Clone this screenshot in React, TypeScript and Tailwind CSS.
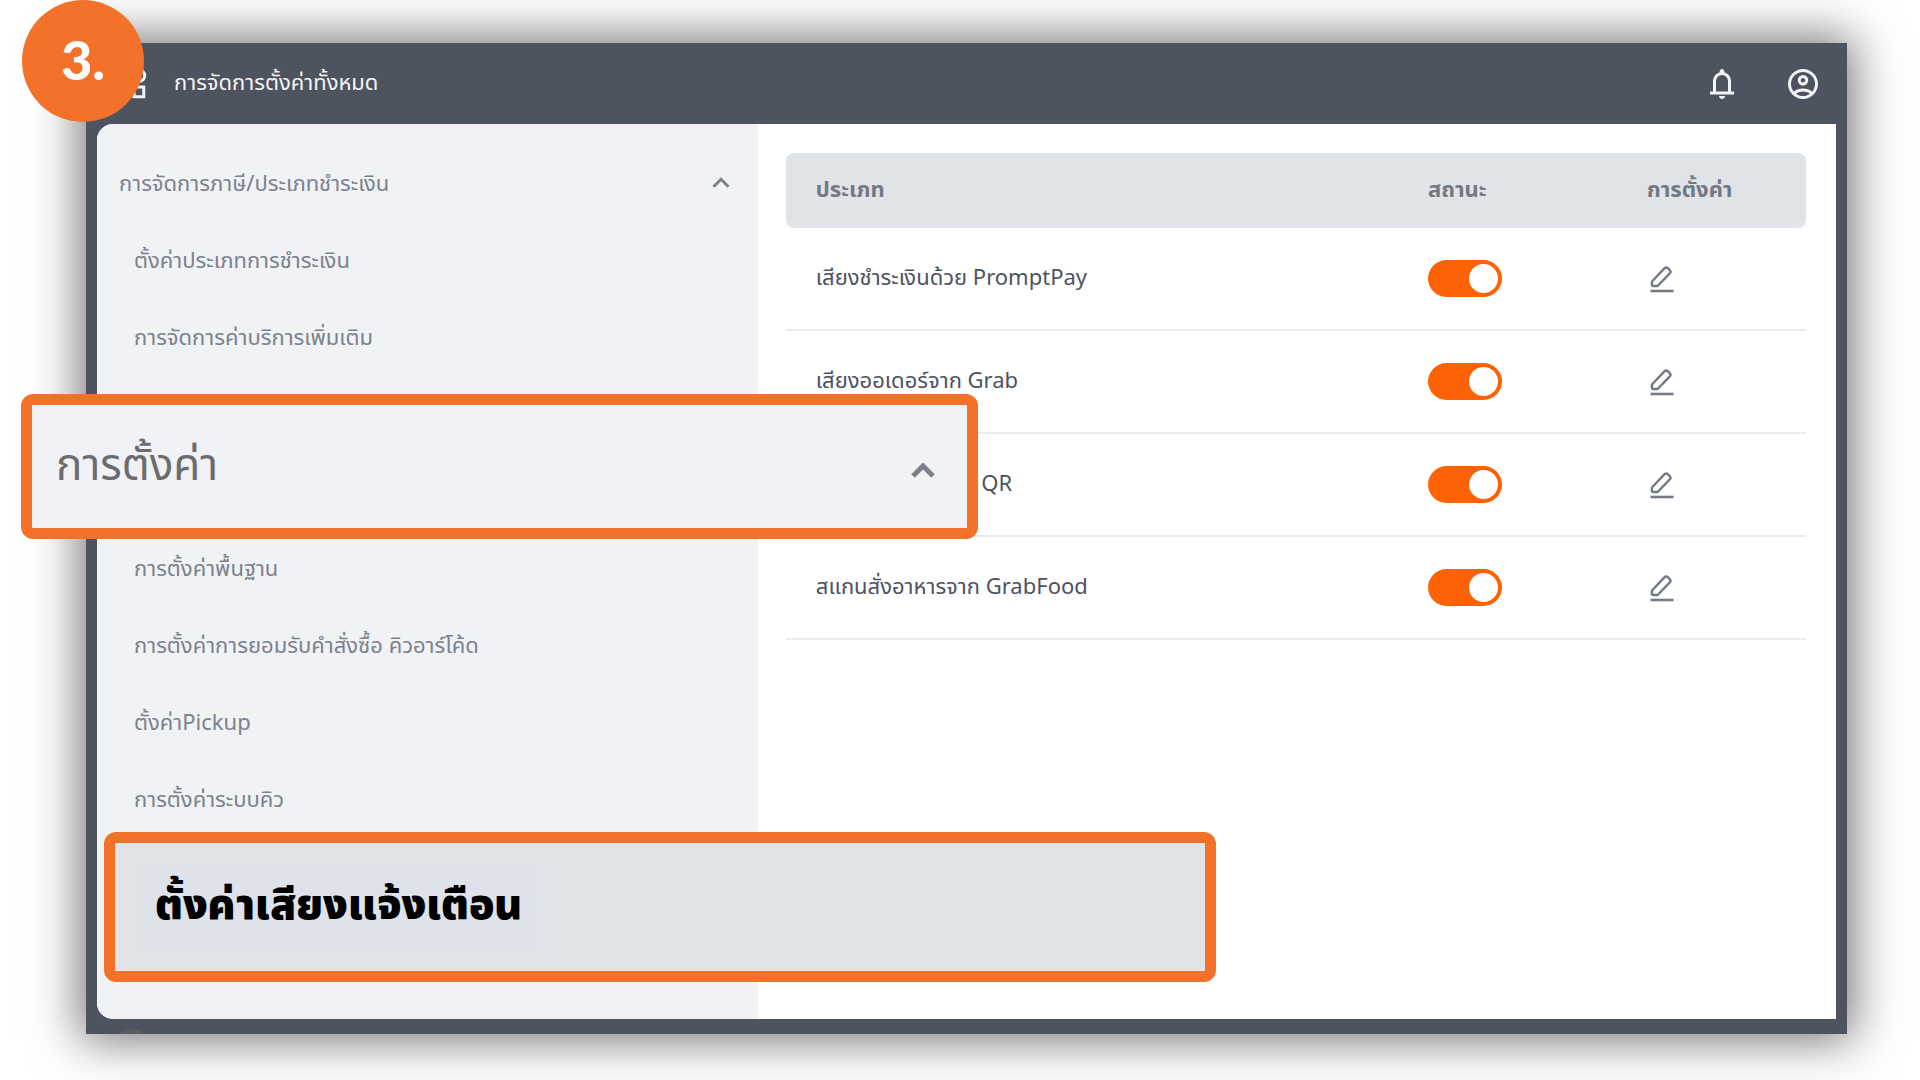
import { useState, type ReactNode } from 'react'

const taxItems = ['ตั้งค่าประเภทการชำระเงิน', 'การจัดการค่าบริการเพิ่มเติม']

const settingItems = [
  'การตั้งค่าพื้นฐาน',
  'การตั้งค่าการยอมรับคำสั่งซื้อ คิวอาร์โค้ด',
  'ตั้งค่าPickup',
  'การตั้งค่าระบบคิว',
]

const sounds = [
  'เสียงชำระเงินด้วย PromptPay',
  'เสียงออเดอร์จาก Grab',
  'เสียงสั่งอาหารด้วย QR',
  'สแกนสั่งอาหารจาก GrabFood',
]

function MaterialIcon({ d }: { d: string }) {
  return (
    <svg viewBox="0 -960 960 960" className="size-9" fill="currentColor" aria-hidden="true">
      <path d={d} />
    </svg>
  )
}

function WidgetsIcon() {
  return (
    <svg viewBox="0 0 24 24" className="size-9" fill="none" stroke="currentColor" strokeWidth="2" aria-hidden="true">
      <rect x="3.5" y="3" width="6.5" height="6.5" />
      <circle cx="17.3" cy="6.4" r="3.9" />
      <rect x="3.5" y="14" width="6.5" height="6.5" />
      <rect x="14" y="14" width="6.5" height="6.5" />
    </svg>
  )
}

function BellIcon() {
  return (
    <MaterialIcon d="M160-200v-80h80v-280q0-83 50-147.5T420-792v-28q0-25 17.5-42.5T480-880t42.5 17.5T540-820v28q80 20 130 84.5T720-560v280h80v80H160Zm320-300Zm0 420q-33 0-56.5-23.5T400-160h160q0 33-23.5 56.5T480-80ZM320-280h320v-280q0-66-47-113t-113-47q-66 0-113 47t-47 113v280Z" />
  )
}

function AccountIcon() {
  return (
    <MaterialIcon d="M234-276q51-39 114-61.5T480-360q69 0 132 22.5T726-276q35-41 54.5-93T800-480q0-133-93.5-226.5T480-800q-133 0-226.5 93.5T160-480q0 59 19.5 111t54.5 93Zm246-164q-59 0-99.5-40.5T340-580q0-59 40.5-99.5T480-720q59 0 99.5 40.5T620-580q0 59-40.5 99.5T480-440Zm0 360q-83 0-156-31.5T197-197q-54-54-85.5-127T80-480q0-83 31.5-156T197-763q54-54 127-85.5T480-880q83 0 156 31.5T763-763q54 54 85.5 127T880-480q0 83-31.5 156T763-197q-54 54-127 85.5T480-80Zm0-80q53 0 100-15.5t86-44.5q-39-29-86-44.5T480-280q-53 0-100 15.5T294-220q39 29 86 44.5T480-160Zm0-360q26 0 43-17t17-43q0-26-17-43t-43-17q-26 0-43 17t-17 43q0 26 17 43t43 17Z" />
  )
}

function PencilIcon() {
  return (
    <svg viewBox="0 0 24 28" className="h-7 w-6" fill="none" stroke="currentColor" strokeWidth="2.4" aria-hidden="true">
      <path d="M2 16.5 14.6 3.2q1.6-1.6 3.2 0l2 2q1.5 1.6 0 3.2L7.6 21H3.4q-1.6 0-1.6-1.6z" strokeLinejoin="round" />
      <path d="M.5 26h23" strokeWidth="2.6" />
    </svg>
  )
}

function ChevronUp({ className, width }: { className: string; width: number }) {
  return (
    <svg viewBox="0 0 24 16" className={className} fill="none" stroke="currentColor" strokeWidth={width} aria-hidden="true">
      <path d="m2 13 10-10 10 10" />
    </svg>
  )
}

function SidebarLink({ children }: { children: ReactNode }) {
  return (
    <a href="#" className="flex h-[77px] items-center pl-[37px] text-[#7b828d]">
      {children}
    </a>
  )
}

function Toggle({ label }: { label: string }) {
  const [on, setOn] = useState(true)

  return (
    <label className="relative block h-[37px] w-[74px] cursor-pointer">
      <input
        type="checkbox"
        role="switch"
        aria-label={label}
        checked={on}
        onChange={() => setOn(!on)}
        className="peer block h-full w-full appearance-none rounded-full bg-gray-300 checked:bg-[#ff6205]"
      />
      <span className="absolute top-1 left-1 size-[29px] rounded-full bg-white peer-checked:left-[41px]" />
    </label>
  )
}

export default function App() {
  return (
    <div className="relative flex min-h-screen flex-col overflow-hidden bg-white pt-[43px] pr-[73px] pb-[46px] pl-[86px] font-['Noto_Sans','Noto_Sans_Thai',sans-serif] text-[22px]">
      <div className="flex flex-1 flex-col bg-[#4d535f] px-[11px] shadow-[0_0_45px_6px_rgba(0,0,0,0.55)]">
        <header className="flex h-[81px] items-center pr-[15px] pl-4 text-[#f3f4f6]">
          <WidgetsIcon />
          <h1 className="ml-[25px] pb-1">การจัดการตั้งค่าทั้งหมด</h1>
          <div className="ml-auto flex gap-[45px]">
            <button type="button" aria-label="การแจ้งเตือน"><BellIcon /></button>
            <button type="button" aria-label="บัญชี"><AccountIcon /></button>
          </div>
        </header>

        <div className="flex flex-1 overflow-hidden rounded-l-2xl bg-white">
          <nav className="w-[38%] bg-[#f0f2f5] pt-5">
            <button type="button" className="flex h-[77px] w-full items-center justify-between pr-7 pl-[22px] text-[#7b828d]">
              การจัดการภาษี/ประเภทชำระเงิน
              <ChevronUp className="h-3 w-[18px]" width={4} />
            </button>
            {taxItems.map((item) => (
              <SidebarLink key={item}>{item}</SidebarLink>
            ))}
            {/* room taken by the enlarged group heading */}
            <div className="h-[154px]" />
            {settingItems.map((item) => (
              <SidebarLink key={item}>{item}</SidebarLink>
            ))}
          </nav>

          <main className="flex-1 pt-[29px] pr-[30px] pl-7">
            <table className="w-full table-fixed border-separate border-spacing-0 text-left">
              <thead>
                <tr className="h-[75px] text-[#727984]">
                  <th className="rounded-l-lg bg-[#e0e3e8] pb-1 pl-[30px]">ประเภท</th>
                  <th className="w-[219px] bg-[#e0e3e8] pb-1">สถานะ</th>
                  <th className="w-[159px] rounded-r-lg bg-[#e0e3e8] pb-1">การตั้งค่า</th>
                </tr>
              </thead>
              <tbody>
                {sounds.map((sound) => (
                  <tr key={sound} className="h-[103px] text-[#4d535f]">
                    <td className="border-b-2 border-[#e8eaee] pb-1 pl-[30px]">{sound}</td>
                    <td className="border-b-2 border-[#e8eaee]">
                      <Toggle label={sound} />
                    </td>
                    <td className="border-b-2 border-[#e8eaee] pl-[3px]">
                      <button type="button" aria-label={`แก้ไข ${sound}`} className="block text-[#737a86]">
                        <PencilIcon />
                      </button>
                    </td>
                  </tr>
                ))}
              </tbody>
            </table>
          </main>
        </div>

        {/* top edge of a round button cut off by the window */}
        <div className="h-[15px] overflow-hidden pt-2.5 pl-4">
          <div className="size-9 rounded-full bg-[#5b5b60]" />
        </div>
      </div>

      <div className="absolute top-0 left-[22px] flex size-[122px] items-center justify-center rounded-full bg-[#f37128] pb-1 font-[Lato,sans-serif] text-[54px] font-black text-white">
        3.
      </div>

      <button
        type="button"
        className="absolute top-[394px] left-[21px] flex h-[145px] w-[957px] items-center justify-between rounded-xl border-[11px] border-[#f37128] bg-[#f0f2f5] pr-8 pl-6 text-[44px] text-[#6b6c70]"
      >
        <span className="pb-2">การตั้งค่า</span>
        <ChevronUp className="mt-2 h-4 w-6 text-[#7b828d]" width={5} />
      </button>

      <a
        href="#"
        className="absolute top-[832px] left-[104px] flex h-[150px] w-[1112px] items-center rounded-xl border-[11px] border-[#f37128] bg-[#e0e3e8] pl-7 text-[42px] font-black text-black"
      >
        <span className="bg-[#dee2ea] px-3 pb-2 leading-[70px]">ตั้งค่าเสียงแจ้งเตือน</span>
      </a>
    </div>
  )
}
